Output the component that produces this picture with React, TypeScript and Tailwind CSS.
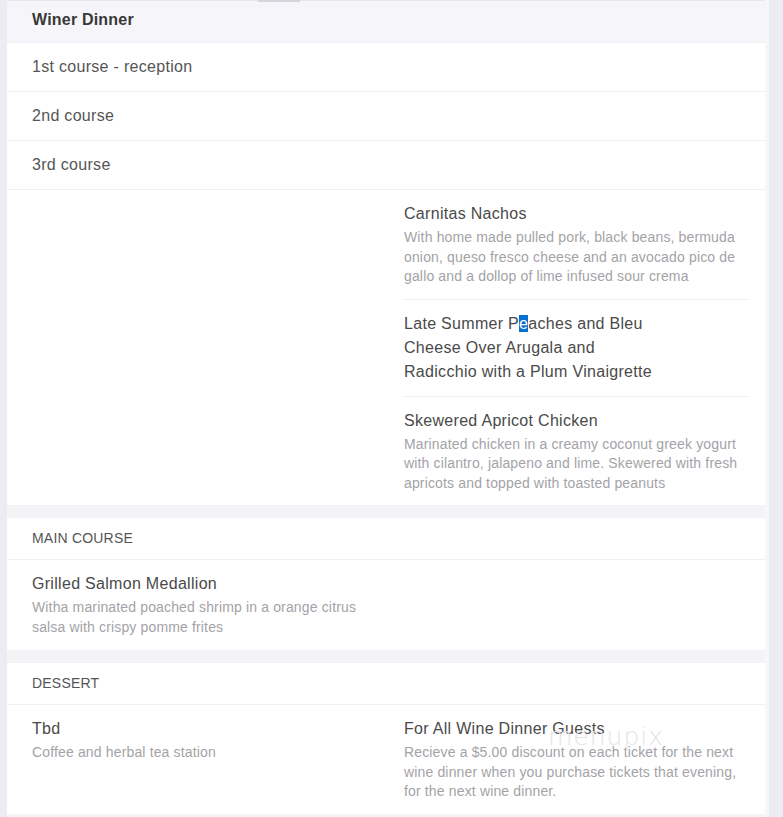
import React from 'react';

type Item = { name: React.ReactNode; desc?: string };

const MenuItem: React.FC<{ item: Item; last?: boolean }> = ({ item, last }) => (
    <div className={`py-[12px] ${last ? '' : 'border-b border-[#efeff2]'}`}>
        <div className="w-3/4 text-[16px] leading-[24px] tracking-[0.3px] text-[#4a4a4a]">{item.name}</div>
        {item.desc && (
            <div className="mt-[2px] text-[14px] leading-[19.5px] tracking-[0.15px] text-[#a3a3a7]">{item.desc}</div>
        )}
    </div>
);

const SectionHead: React.FC<{ title: string }> = ({ title }) => (
    <div className="h-[42px] px-[25px] flex items-center text-[14px] tracking-[0.2px] text-[#555] border-b border-[#efeff2] uppercase">
        {title}
    </div>
);

const App: React.FC = () => {
    return (
        <div
            className="min-h-[817px] bg-[#ececf3] pl-[7px] pr-[14px] relative"
            style={{ fontFamily: '"Liberation Sans", Arial, sans-serif' }}
        >
            <div className="bg-[#f4f4f6] border-r-[4px] border-[#f7f7fa] pb-[5px] flex flex-col gap-[13px]">
                {/* Header + course rows */}
                <div className="bg-white">
                    <div className="h-[43px] bg-[#f6f6fa] border-b border-b-[#f0f0f4] px-[25px] pb-[2px] flex items-center relative">
                        <div className="absolute top-0 left-0 right-0 h-[1px] bg-[#e6e6eb]" />
                        <div className="absolute top-0 left-[251px] w-[42px] h-[2px] bg-[#d6d6dc]" />
                        <span className="text-[16px] font-bold tracking-[0.2px] text-[#383838]">Winer Dinner</span>
                    </div>
                    {['1st course - reception', '2nd course', '3rd course'].map((t) => (
                        <div
                            key={t}
                            className="h-[49px] px-[25px] flex items-center border-b border-[#efeff2] text-[16px] tracking-[0.3px] text-[#555]"
                        >
                            {t}
                        </div>
                    ))}
                    <div className="grid grid-cols-2">
                        <div className="pl-[25px] pr-[10px]" />
                        <div className="pl-[18px] pr-[17px]">
                            <MenuItem
                                item={{
                                    name: 'Carnitas Nachos',
                                    desc: 'With home made pulled pork, black beans, bermuda onion, queso fresco cheese and an avocado pico de gallo and a dollop of lime infused sour crema',
                                }}
                            />
                            <MenuItem
                                item={{
                                    name: (
                                        <>
                                            Late Summer P<span className="bg-[#0b6fd0] text-white">e</span>aches and Bleu Cheese Over Arugala and Radicchio with a Plum Vinaigrette
                                        </>
                                    ),
                                }}
                            />
                            <MenuItem
                                last
                                item={{
                                    name: 'Skewered Apricot Chicken',
                                    desc: 'Marinated chicken in a creamy coconut greek yogurt with cilantro, jalapeno and lime. Skewered with fresh apricots and topped with toasted peanuts',
                                }}
                            />
                        </div>
                    </div>
                </div>

                {/* Main course */}
                <div className="bg-white">
                    <SectionHead title="Main Course" />
                    <div className="grid grid-cols-2">
                        <div className="pl-[25px] pr-[10px] pb-[1px]">
                            <MenuItem
                                last
                                item={{
                                    name: 'Grilled Salmon Medallion',
                                    desc: 'Witha marinated poached shrimp in a orange citrus salsa with crispy pomme frites',
                                }}
                            />
                        </div>
                        <div />
                    </div>
                </div>

                {/* Dessert */}
                <div className="bg-white">
                    <SectionHead title="Dessert" />
                    <div className="grid grid-cols-2">
                        <div className="pl-[25px] pr-[10px]">
                            <MenuItem last item={{ name: 'Tbd', desc: 'Coffee and herbal tea station' }} />
                        </div>
                        <div className="pl-[18px] pr-[17px] relative">
                            <MenuItem
                                last
                                item={{
                                    name: 'For All Wine Dinner Guests',
                                    desc: 'Recieve a $5.00 discount on each ticket for the next wine dinner when you purchase tickets that evening, for the next wine dinner.',
                                }}
                            />
                            <div
                                className="absolute left-[162px] top-[13px] text-[25px] tracking-[1px] text-[#e4e4e8] pointer-events-none select-none"
                                style={{ fontFamily: '"DejaVu Sans", sans-serif', fontWeight: 200 }}
                            >
                                menupix
                            </div>
                        </div>
                    </div>
                </div>
            </div>
        </div>
    );
};

export default App;
